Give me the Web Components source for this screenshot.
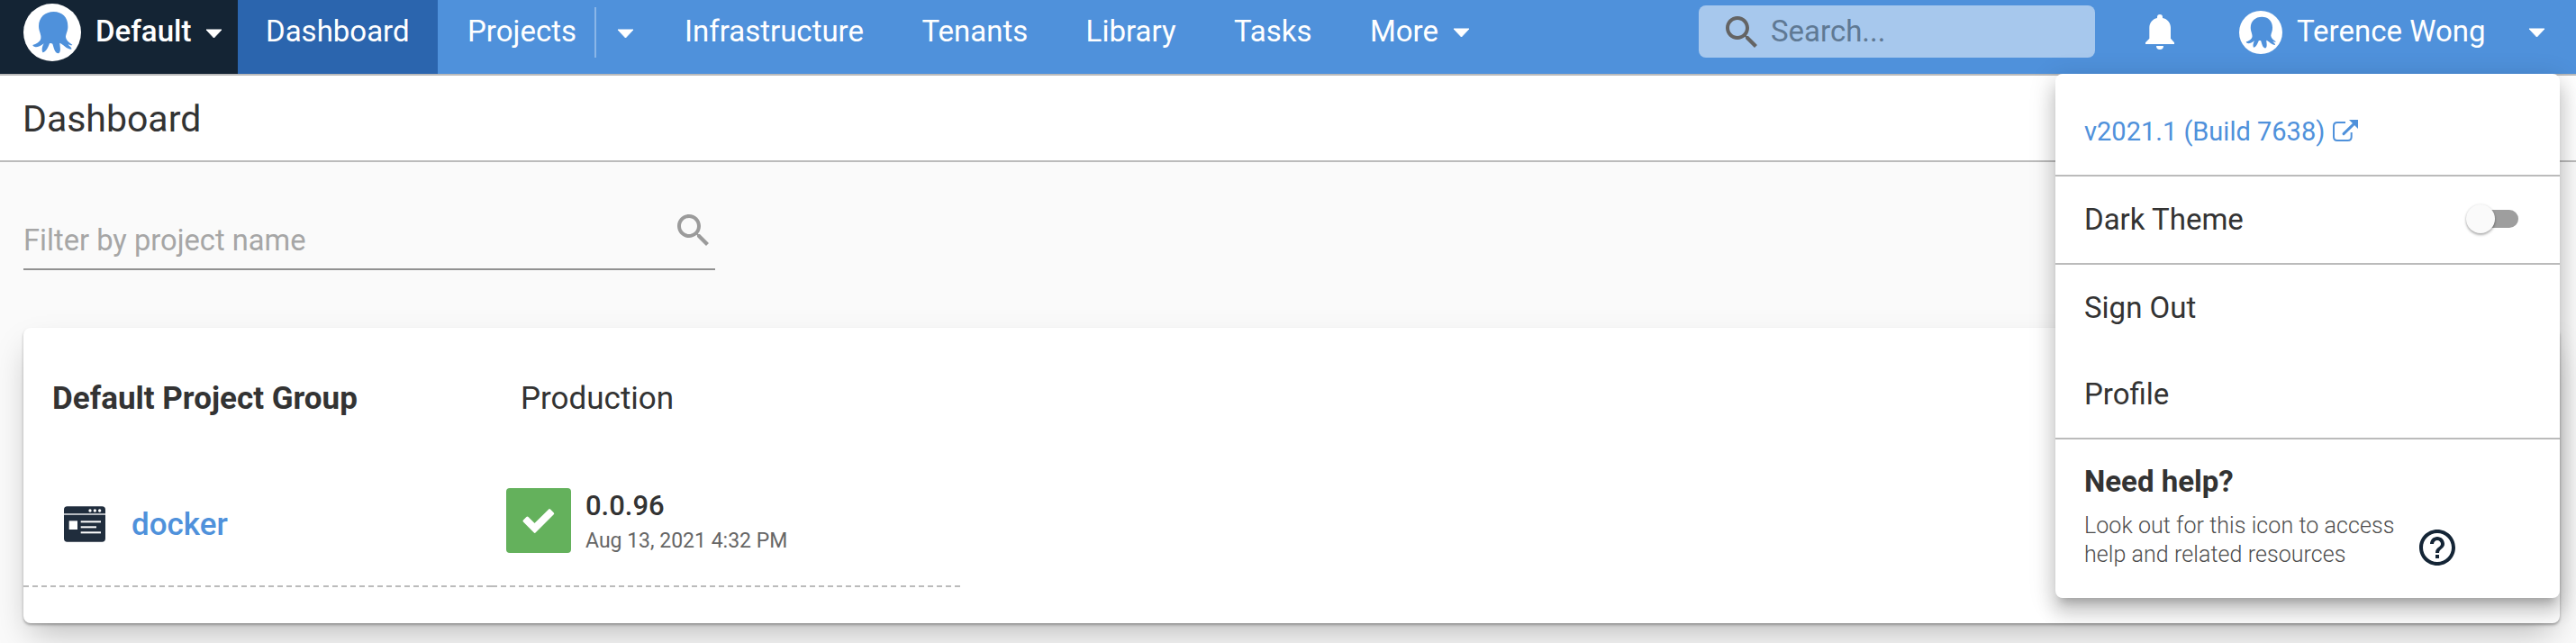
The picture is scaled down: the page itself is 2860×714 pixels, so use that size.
<!DOCTYPE html>
<html lang="en">
<head>
<meta charset="utf-8">
<title>Dashboard</title>
<style>
html,body{margin:0;height:714px;overflow:hidden;background:#fafafa}
body{font-family:Roboto,"Liberation Sans",sans-serif;color:#333;font-size:33px}
</style>
</head>
<body>
<octo-app></octo-app>
<script>
function define(name, html) {
  const template = document.createElement('template');
  template.innerHTML = html;
  customElements.define(name, class extends HTMLElement {
    constructor() {
      super();
      this.attachShadow({ mode: 'open' }).append(template.content.cloneNode(true));
    }
  });
}

define('octo-logo', `
<style>:host{display:block;width:64px;height:64px;flex:none;color:#4f91db}svg{display:block;width:100%;height:100%}</style>
<svg viewBox="0 0 192 192"><circle cx="96" cy="96" r="96" fill="#fff"/>
<path fill="currentColor" d="M101 27C72 27 51 46 51 75C51 92 60 103 58 116C55 128 42 134 31 138C33 147 50 148 68 133C62 143 60 155 64 163C74 162 82 147 87 133C90 132 94 132 97 134C101 146 104 165 117 166C127 160 121 142 121 131C133 135 143 152 160 152C162 146 152 142 149 136C155 138 161 141 163 137C152 130 141 120 141 110C142 98 149 90 148 74C148 46 129 27 101 27Z"/></svg>`);

define('octo-caret', `
<style>:host{display:block;flex:none;width:19px;height:11px;margin-top:3px}svg{display:block}</style>
<svg width="19" height="11" viewBox="0 0 19 11"><path fill="#fff" stroke="#fff" stroke-linejoin="round" d="M1 1H18L9.500 10Z"/></svg>`);

define('icon-search', `
<style>:host{display:block;flex:none;width:48px;height:48px}svg{display:block}</style>
<svg width="48" height="48" viewBox="0 0 24 24"><path fill="currentColor" d="M15.500 14h-.79l-.28-.27C15.410 12.590 16 11.110 16 9.500 16 5.910 13.090 3 9.500 3S3 5.910 3 9.500 5.910 16 9.500 16c1.610 0 3.090-.59 4.230-1.570l.27.28v.79l5 4.990L20.490 19l-4.990-5zm-6 0C7.010 14 5 11.990 5 9.500S7.010 5 9.500 5 14 7.010 14 9.500 11.990 14 9.500 14z"/></svg>`);

define('icon-bell', `
<style>:host{display:block;flex:none;width:32px;height:39px}svg{display:block}</style>
<svg width="32" height="39" viewBox="0 0 96 117"><path fill="#fff" d="M0 99V94L13 80V44C13 28 24 15 39 12V9a9 9 0 0 1 18 0V12C73 15 84 28 84 44V80L96 94V99ZM36 105H60A12 12 0 0 1 36 105Z"/></svg>`);

define('icon-help', `
<style>:host{display:block;flex:none;width:48px;height:48px}svg{display:block}</style>
<svg width="48" height="48" viewBox="0 0 24 24"><path fill="#142536" d="M11 18h2v-2h-2v2zm1-16C6.480 2 2 6.480 2 12s4.480 10 10 10 10-4.480 10-10S17.520 2 12 2zm0 18c-4.410 0-8-3.590-8-8s3.590-8 8-8 8 3.590 8 8-3.590 8-8 8zm0-14c-2.210 0-4 1.790-4 4h2c0-1.100.9-2 2-2s2 .9 2 2c0 2-3 1.750-3 5h2c0-2.250 3-2.500 3-5 0-2.210-1.790-4-4-4z"/></svg>`);

define('icon-external', `
<style>:host{display:block;flex:none;width:30px;height:28px}svg{display:block}</style>
<svg width="30" height="28" viewBox="15 18 90 84"><g fill="none" stroke="#4f91db"><path stroke-width="6" d="M60 33H33Q21 33 21 45V81Q21 93 33 93H68Q80 93 80 81V66"/><path stroke-width="9" stroke-linecap="round" d="M54 71L89 37"/></g><path fill="#4f91db" d="M72 24H102V54Z"/></svg>`);

define('icon-project', `
<style>:host{display:block;flex:none;width:46px;height:40px}svg{display:block}</style>
<svg width="46" height="40" viewBox="33 77 138 120"><rect x="33" y="78" width="138" height="118" rx="11" fill="#202d3d"/><g fill="#fff"><rect x="33" y="102" width="138" height="4"/><circle cx="120" cy="92" r="5"/><circle cx="136" cy="92" r="5"/><circle cx="152" cy="92" r="5"/><rect x="50" y="126" width="28" height="29"/><rect x="89" y="126" width="67" height="6"/><rect x="89" y="144" width="52" height="6"/><rect x="89" y="162" width="67" height="6"/></g></svg>`);

define('status-success', `
<style>:host{display:block;flex:none;width:72px;height:72px;border-radius:4px;background:#64b15c}svg{display:block}</style>
<svg width="72" height="72" viewBox="562 542 72 72"><path fill="#fff" stroke="#fff" stroke-width="3" stroke-linejoin="round" d="M582 578.500L585.500 575L593.500 583L610 566.700L613.700 570.300L593.700 590.300Z"/></svg>`);

define('nav-item', `
<style>:host{display:flex;align-items:center;flex:none;height:70px;padding:0 32.400px 12px 32px;white-space:nowrap}
:host([active]){background:#2b65ae}</style><slot></slot>`);

define('octo-header', `
<style>
:host{display:flex;height:82px;background:#4f91db;border-bottom:2px solid #bbb;color:#fff;line-height:70px}
.space{display:flex;align-items:center;box-sizing:border-box;width:264px;height:82px;background:#142434;padding:0 0 10px 26px;font-weight:500}
.space span{margin-left:16px;width:122px;margin-top:-2px}
nav-item[active]{padding:0 32px 12px 31px}
.drop{display:flex;align-items:center;width:68px;height:72px}
.drop i{width:2px;height:56px;background:#8ab6e8;margin-right:23px}
.more octo-caret{margin-left:16px}
.right{display:flex;margin-left:auto;height:70px;align-items:center;padding-right:34px}
.search{display:flex;align-items:center;box-sizing:border-box;width:440px;height:58px;border-radius:8px;background:#a7c8ed;padding-left:24px;color:#5f7994;line-height:58px}
.search icon-search{color:#646464;margin-top:2px}
.search span{margin-left:8px}
icon-bell{margin:0 72px 0 56px}
octo-logo.me{width:48px;height:48px;margin-top:2px}
.user{display:flex;align-items:center;justify-content:space-between;width:276px;margin-left:16px}
</style>
<div class="space"><octo-logo></octo-logo><span>Default</span><octo-caret></octo-caret></div>
<nav-item active style="width:159px">Dashboard</nav-item>
<nav-item style="padding-left:33px;padding-right:18px;width:123px">Projects</nav-item>
<div class="drop"><i></i><octo-caret></octo-caret></div>
<nav-item>Infrastructure</nav-item><nav-item>Tenants</nav-item><nav-item>Library</nav-item><nav-item>Tasks</nav-item>
<nav-item class="more">More<octo-caret></octo-caret></nav-item>
<div class="right"><div class="search"><icon-search></icon-search><span>Search...</span></div><icon-bell></icon-bell><octo-logo class="me"></octo-logo><div class="user"><span>Terence Wong</span><octo-caret></octo-caret></div></div>`);

define('page-title', `
<style>:host{display:block;height:94px;line-height:96px;background:#fff;border-bottom:2px solid #bbb;padding-left:25px;font-size:41px}</style><slot></slot>`);

define('project-filter', `
<style>:host{display:flex;justify-content:space-between;width:768px;height:68px;margin:50px 0 0 26px;border-bottom:2px solid #919191;color:#a6a6a6;font-size:32.700px}
span{line-height:74px}icon-search{color:#9b9b9b;margin-top:2px}</style>
<span><slot></slot></span><icon-search></icon-search>`);

define('project-card', `
<style>
:host{display:block;box-sizing:border-box;height:328px;margin:64px 18px 0 26px;border-radius:8px;background:#fff;box-shadow:0 2px 3px rgba(0,0,0,.3),0 18px 36px -8px rgba(0,0,0,.26)}
.grid{display:grid;grid-template-columns:520px 520px;grid-template-rows:142px 146px}
.head{font-size:35px;line-height:158px}
.group{font-weight:700;padding-left:32px}
.env{padding-left:32px}
.cell{display:flex;align-items:center;box-sizing:border-box;height:146px;padding-bottom:2px;background:repeating-linear-gradient(90deg,#bbb 0 6px,transparent 6px 10.078px) bottom/100% 2px no-repeat}
.project{padding-left:45px;padding-top:8px;color:#4f91db;font-size:35px;font-weight:500}
.project span{margin-left:29px}
.release{padding-left:16px}
.text{margin:6px 0 0 16px}
.version{font-size:31px;font-weight:500;line-height:38px}
.date{font-size:23px;line-height:39px;color:#666}
</style>
<div class="grid"><div class="head group">Default Project Group</div><div class="head env">Production</div>
<div class="cell project"><icon-project></icon-project><span>docker</span></div>
<div class="cell release"><status-success></status-success><div class="text"><div class="version">0.0.96</div><div class="date">Aug 13, 2021 4:32 PM</div></div></div></div>`);

define('toggle-switch', `
<style>:host{display:flex;align-items:center;width:58px;height:32px}
.track{flex:none;width:48px;height:20px;border-radius:10px;background:#9e9e9e;margin-left:10px}
.thumb{flex:none;width:32px;height:32px;border-radius:50%;background:#fafafa;margin-right:-32px;z-index:1;box-shadow:0 2px 3px rgba(0,0,0,.3),0 0 3px rgba(0,0,0,.1)}</style>
<div class="thumb"></div><div class="track"></div>`);

define('menu-row', `
<style>:host{display:flex;align-items:center;justify-content:space-between;box-sizing:border-box;height:96px;padding:0 46px 2px 32px}
:host([line]){height:98px;border-bottom:2px solid #bbb}</style><slot></slot>`);

define('user-menu', `
<style>
:host{display:block;position:absolute;left:2282px;top:82px;width:560px;height:582px;border-radius:8px;background:#fff;box-shadow:0 10px 10px -6px rgba(0,0,0,.2),0 16px 20px 2px rgba(0,0,0,.14),0 6px 28px 4px rgba(0,0,0,.12)}
.link{height:114px;padding:16px 0 0 32px;justify-content:flex-start;color:#4f91db;font-size:29px}
.link icon-external{margin:-3px 0 0 8px}
b{display:block;font-weight:700;line-height:94px;padding-left:32px}
.help{display:flex;padding-left:32px;margin-top:-14px}
p{margin:0;width:368px;font-size:25px;font-weight:300;line-height:32px;color:#4d4d4d;letter-spacing:.07px;white-space:nowrap}
icon-help{margin-top:16px}
</style>
<menu-row line class="link"><span>v2021.1 (Build 7638)</span><icon-external></icon-external></menu-row>
<menu-row line><span>Dark Theme</span><toggle-switch></toggle-switch></menu-row>
<menu-row>Sign Out</menu-row>
<menu-row line>Profile</menu-row>
<b>Need help?</b>
<div class="help"><p>Look out for this icon to access<br>help and related resources</p><icon-help></icon-help></div>`);

define('octo-app', `
<style>:host{display:block;position:relative;width:2860px;height:714px;overflow:hidden}</style>
<octo-header></octo-header>
<page-title>Dashboard</page-title>
<project-filter>Filter by project name</project-filter>
<project-card></project-card>
<user-menu></user-menu>`);
</script>
</body>
</html>
